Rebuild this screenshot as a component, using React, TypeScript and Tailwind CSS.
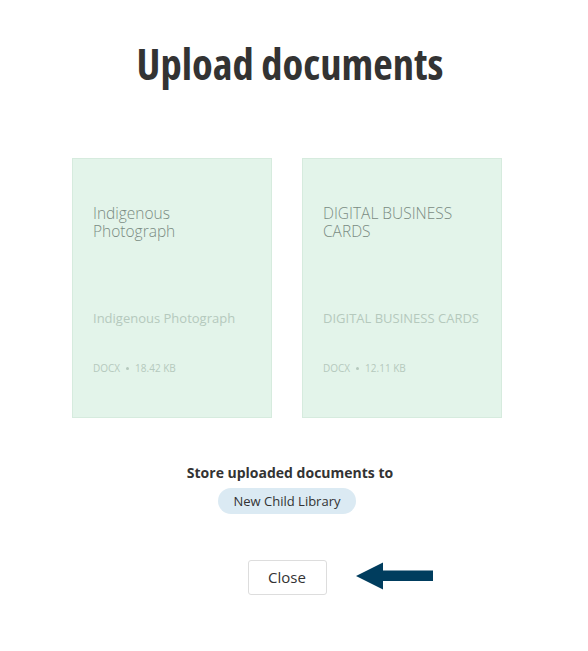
import React from "react";

const cards = [
  { title: "Indigenous Photograph", sub: "Indigenous Photograph", meta: "DOCX", size: "18.42 KB" },
  { title: "DIGITAL BUSINESS CARDS", sub: "DIGITAL BUSINESS CARDS", meta: "DOCX", size: "12.11 KB" },
];

export default function App() {
  return (
    <div className="w-[588px] h-[651px] bg-white" style={{ fontFamily: '"Open Sans", sans-serif' }}>
      <div className="w-[574px] flex flex-col items-center">
        <h1 className="pt-[39px] pl-[6px] text-[42.5px] leading-[50px] font-bold text-[#333333] font-stretch-condensed">
          Upload documents
        </h1>
        <div className="mt-[69px] flex gap-[30px]">
          {cards.map((c) => (
            <div key={c.title} className="w-[200px] h-[260px] bg-[#e3f4ea] border border-[#d6ebde] pl-[20px] pt-[45px]">
              <div className="w-[155px] text-[15.5px] leading-[18px] font-light text-[#7a8b82]">{c.title}</div>
              <div className="mt-[69px] text-[13px] leading-[18px] text-[#b5c9bd] whitespace-nowrap">{c.sub}</div>
              <div className="mt-[34px] text-[10px] leading-[14px] text-[#b5c9bd] flex items-center gap-[6px]">
                <span>{c.meta}</span>
                <span className="w-[3px] h-[3px] rounded-full bg-[#b5c9bd]"></span>
                <span>{c.size}</span>
              </div>
            </div>
          ))}
        </div>
        <div className="mt-[45px] pl-[6px] text-[14px] leading-[20px] font-bold text-[#333333]">Store uploaded documents to</div>
        <div className="mt-[5px] h-[26px] px-[16px] rounded-full bg-[#dbeaf3] text-[13px] leading-[26px] text-[#333333] flex items-center">
          New Child Library
        </div>
        <div className="mt-[46px] relative">
          <button className="w-[79px] h-[35px] border border-[#dddddd] rounded-[3px] bg-white text-[15px] text-[#333333]">Close</button>
          <svg className="absolute left-[108px] top-[2px]" width="78" height="28" viewBox="0 0 78 28">
            <path d="M0 14 L27 0.5 L27 8.5 L77 8.5 L77 19 L27 19 L27 27.5 Z" fill="#003d5e" />
          </svg>
        </div>
      </div>
    </div>
  );
}
